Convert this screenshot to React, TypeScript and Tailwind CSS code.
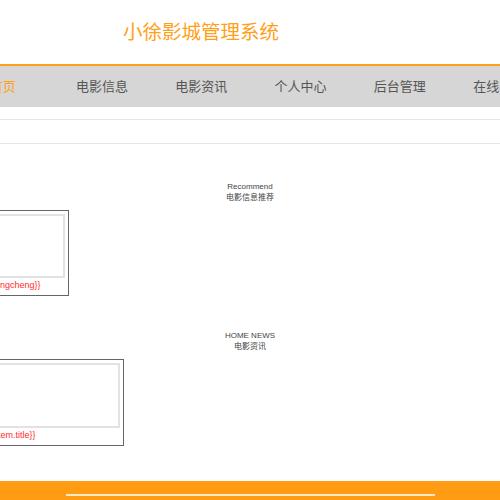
const font = { fontFamily: '"Liberation Sans", "Noto Sans CJK SC", sans-serif' };

const navItems = ["首页", "电影信息", "电影资讯", "个人中心", "后台管理", "在线客服"];

function SectionTitle({ en, cn }: { en: string; cn: string }) {
  return (
    <div className="flex flex-col items-center text-[8px] leading-[11px] text-[#444]">
      <span>{en}</span>
      <span>{cn}</span>
    </div>
  );
}

function Card({ width, imgHeight, label, offset }: { width: number; imgHeight: number; label: string; offset: string }) {
  return (
    <div className={`${offset} border border-[#666] bg-white p-[3px]`} style={{ width }}>
      <div className="border-2 border-[#e2e2e2]" style={{ height: imgHeight }} />
      <div className="pt-[2px] pb-[1px] text-[9px] leading-[11px] text-[#ff2a2a]">{label}</div>
    </div>
  );
}

export default function App() {
  return (
    <div className="w-[500px] h-[500px] overflow-hidden bg-white flex flex-col" style={font}>
      <header className="h-[64px] flex items-center pl-[123px] pt-[2px]">
        <h1 className="text-[19.5px] text-[#ff9f1a]">小徐影城管理系统</h1>
      </header>

      <nav className="border-t-2 border-[#ff9f1a] bg-[#d6d6d6] h-[43px] flex items-center ml-[-47px]">
        {navItems.map((item, i) => (
          <div
            key={item}
            className={`w-[99.3px] shrink-0 text-center text-[13px] ${i === 0 ? "text-[#ff9f1a]" : "text-[#555]"}`}
          >
            {item}
          </div>
        ))}
      </nav>

      <div className="mt-[12px] h-[25px] border-y border-[#e6e6e6]" />

      <section className="mt-[37px]">
        <SectionTitle en="Recommend" cn="电影信息推荐" />
        <div className="mt-[7px] flex">
          <Card width={108} imgHeight={64} label="{{item.mingcheng}}" offset="ml-[-39px]" />
        </div>
      </section>

      <section className="mt-[34px]">
        <SectionTitle en="HOME NEWS" cn="电影资讯" />
        <div className="mt-[7px] flex">
          <Card width={138} imgHeight={65} label="{{item.title}}" offset="ml-[-14px]" />
        </div>
      </section>

      <footer className="mt-auto h-[19px] bg-[#ff9c13] flex items-start pt-[13px] pl-[66px]">
        <div className="w-[369px] h-[2px] bg-[#fde8c8]" />
      </footer>
    </div>
  );
}
